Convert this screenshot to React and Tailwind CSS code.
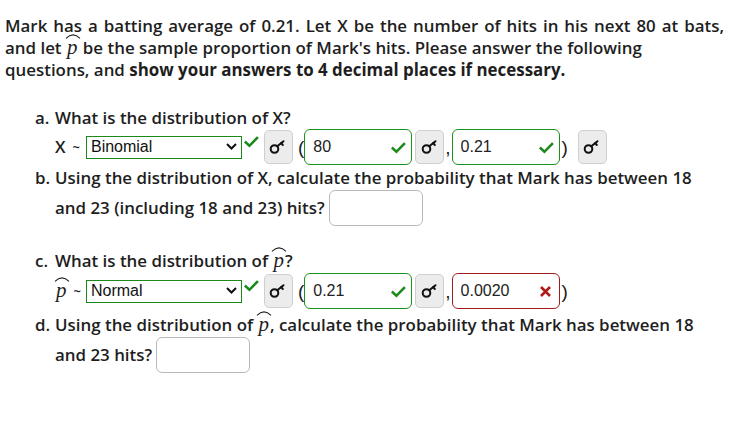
const KeyIcon = () => (
  <svg width="20" height="16" viewBox="0 0 20 16" fill="none" stroke="#111" strokeWidth="2" strokeLinecap="round">
    <circle cx="6.5" cy="10" r="3.8" />
    <path d="M9.3 7.3 L15.5 2.2" />
    <path d="M13.2 4.1 L14.8 6" />
  </svg>
);

const Check = ({ className = '' }) => (
  <svg className={className} width="15" height="12" viewBox="0 0 15 12" fill="none" stroke="#1b8a1b" strokeWidth="2.6" strokeLinecap="square">
    <path d="M1.8 6.4 L5.4 9.8 L13 2" />
  </svg>
);

const Cross = ({ className = '' }) => (
  <svg className={className} width="13" height="13" viewBox="0 0 13 13" fill="none" stroke="#b11a1a" strokeWidth="2.6">
    <path d="M2 2 L11 11 M11 2 L2 11" />
  </svg>
);

const PHat = () => (
  <span className="relative inline-block px-[1px]">
    <svg className="absolute left-[-1px] top-[-5px]" width="16" height="7" viewBox="0 0 16 7" fill="none" stroke="#222" strokeWidth="1.1">
      <path d="M1 6.4 Q8 -0.6 15 6.4" />
    </svg>
    <span className="inline-block font-['Liberation_Serif',serif] text-[21px] font-normal italic leading-[14px]">p</span>
  </span>
);

const KeyButton = ({ className = '' }) => (
  <button className={`flex h-[34px] w-[29px] shrink-0 items-center justify-center rounded-[5px] border border-[#cfcfcf] bg-[#ececec] ${className}`}>
    <KeyIcon />
  </button>
);

const AnswerBox = ({ value, ok = true }) => (
  <div className="relative shrink-0">
    <input
      readOnly
      value={value}
      className={`h-[36px] w-[108px] rounded-[6px] border bg-white pl-[8px] pr-[24px] font-['Liberation_Sans',Arial,sans-serif] text-[16px] font-normal text-[#222] outline-none ${ok ? 'border-[#1b931b]' : 'border-[#a11d1d]'}`}
    />
    {ok ? (
      <Check className="absolute right-[6px] top-[13px]" />
    ) : (
      <Cross className="absolute right-[8px] top-[12px]" />
    )}
  </div>
);

const FakeSelect = ({ value }) => (
  <div className="relative shrink-0">
    <select
      value={value}
      onChange={() => {}}
      className="h-[23px] w-[156px] appearance-none rounded-none border border-[#1b8a1b] bg-white pl-[4px] font-['Liberation_Sans',Arial,sans-serif] text-[16px] font-normal leading-[20px] text-[#111] outline-none"
    >
      <option>Binomial</option>
      <option>Normal</option>
      <option>Poisson</option>
    </select>
    <svg className="pointer-events-none absolute right-[5px] top-[8px]" width="11" height="7" viewBox="0 0 11 7" fill="none" stroke="#111" strokeWidth="2">
      <path d="M1 1 L5.5 5.5 L10 1" />
    </svg>
  </div>
);

const Paren = ({ children, className = '' }) => (
  <span className={`font-['Liberation_Sans',Arial,sans-serif] text-[19px] font-normal leading-none text-[#1a1a1a] ${className}`}>{children}</span>
);

const EmptyBox = ({ className = '' }) => (
  <input readOnly className={`h-[36px] w-[94px] rounded-[6px] border border-[#b8b8b8] bg-white outline-none ${className}`} />
);

export default function App() {
  return (
    <div className="min-h-screen bg-white pl-[5px] pt-[15px] font-['Open_Sans',sans-serif] text-[16.9px] font-semibold leading-[22px] text-[#1e1e1e]">
      <div className="whitespace-nowrap">
        <div className="[word-spacing:1.6px]">Mark has a batting average of 0.21. Let X be the number of hits in his next 80 at bats,</div>
        <div>
          and let <PHat /> be the sample proportion of Mark's hits. Please answer the following
        </div>
        <div>
          questions, and <span className="font-bold">show your answers to 4 decimal places if necessary.</span>
        </div>
      </div>

      <div className="mt-[26px] pl-[30px]">
        {/* a */}
        <div className="flex">
          <span className="w-[20px]">a.</span>
          <span>What is the distribution of X?</span>
        </div>
        <div className="flex h-[36px] items-center pl-[20px]">
          <span>X</span>
          <span className="ml-[7px] text-[13px]">~</span>
          <span className="ml-[6px]"><FakeSelect value="Binomial" /></span>
          <Check className="ml-[2px] mt-[-10px]" />
          <KeyButton className="ml-[5px]" />
          <Paren className="ml-[5px]">(</Paren>
          <AnswerBox value="80" />
          <KeyButton className="ml-[3px]" />
          <Paren className="ml-[1px] mr-[1px] text-[16px]">,</Paren>
          <AnswerBox value="0.21" />
          <Paren className="ml-[2px]">)</Paren>
          <KeyButton className="ml-[10px]" />
        </div>

        {/* b */}
        <div className="mt-[2px] flex">
          <span className="w-[20px] shrink-0">b.</span>
          <div>
            <div>Using the distribution of X, calculate the probability that Mark has between 18</div>
            <div className="mt-[1px] flex items-center">
              <span>and 23 (including 18 and 23) hits?</span>
              <EmptyBox className="ml-[4px]" />
            </div>
          </div>
        </div>

        {/* c */}
        <div className="mt-[24px] flex">
          <span className="w-[20px]">c.</span>
          <span>
            What is the distribution of <PHat />?
          </span>
        </div>
        <div className="mt-[1px] flex h-[36px] items-center pl-[20px]">
          <PHat />
          <span className="ml-[6px] text-[13px]">~</span>
          <span className="ml-[5px]"><FakeSelect value="Normal" /></span>
          <Check className="ml-[2px] mt-[-10px]" />
          <KeyButton className="ml-[5px]" />
          <Paren className="ml-[5px]">(</Paren>
          <AnswerBox value="0.21" />
          <KeyButton className="ml-[3px]" />
          <Paren className="ml-[1px] mr-[1px] text-[16px]">,</Paren>
          <AnswerBox value="0.0020" ok={false} />
          <Paren className="ml-[2px]">)</Paren>
        </div>

        {/* d */}
        <div className="mt-[5px] flex">
          <span className="w-[20px] shrink-0">d.</span>
          <div>
            <div>
              Using the distribution of <PHat />, calculate the probability that Mark has between 18
            </div>
            <div className="mt-[1px] flex items-center">
              <span>and 23 hits?</span>
              <EmptyBox className="ml-[4px]" />
            </div>
          </div>
        </div>
      </div>
    </div>
  );
}
